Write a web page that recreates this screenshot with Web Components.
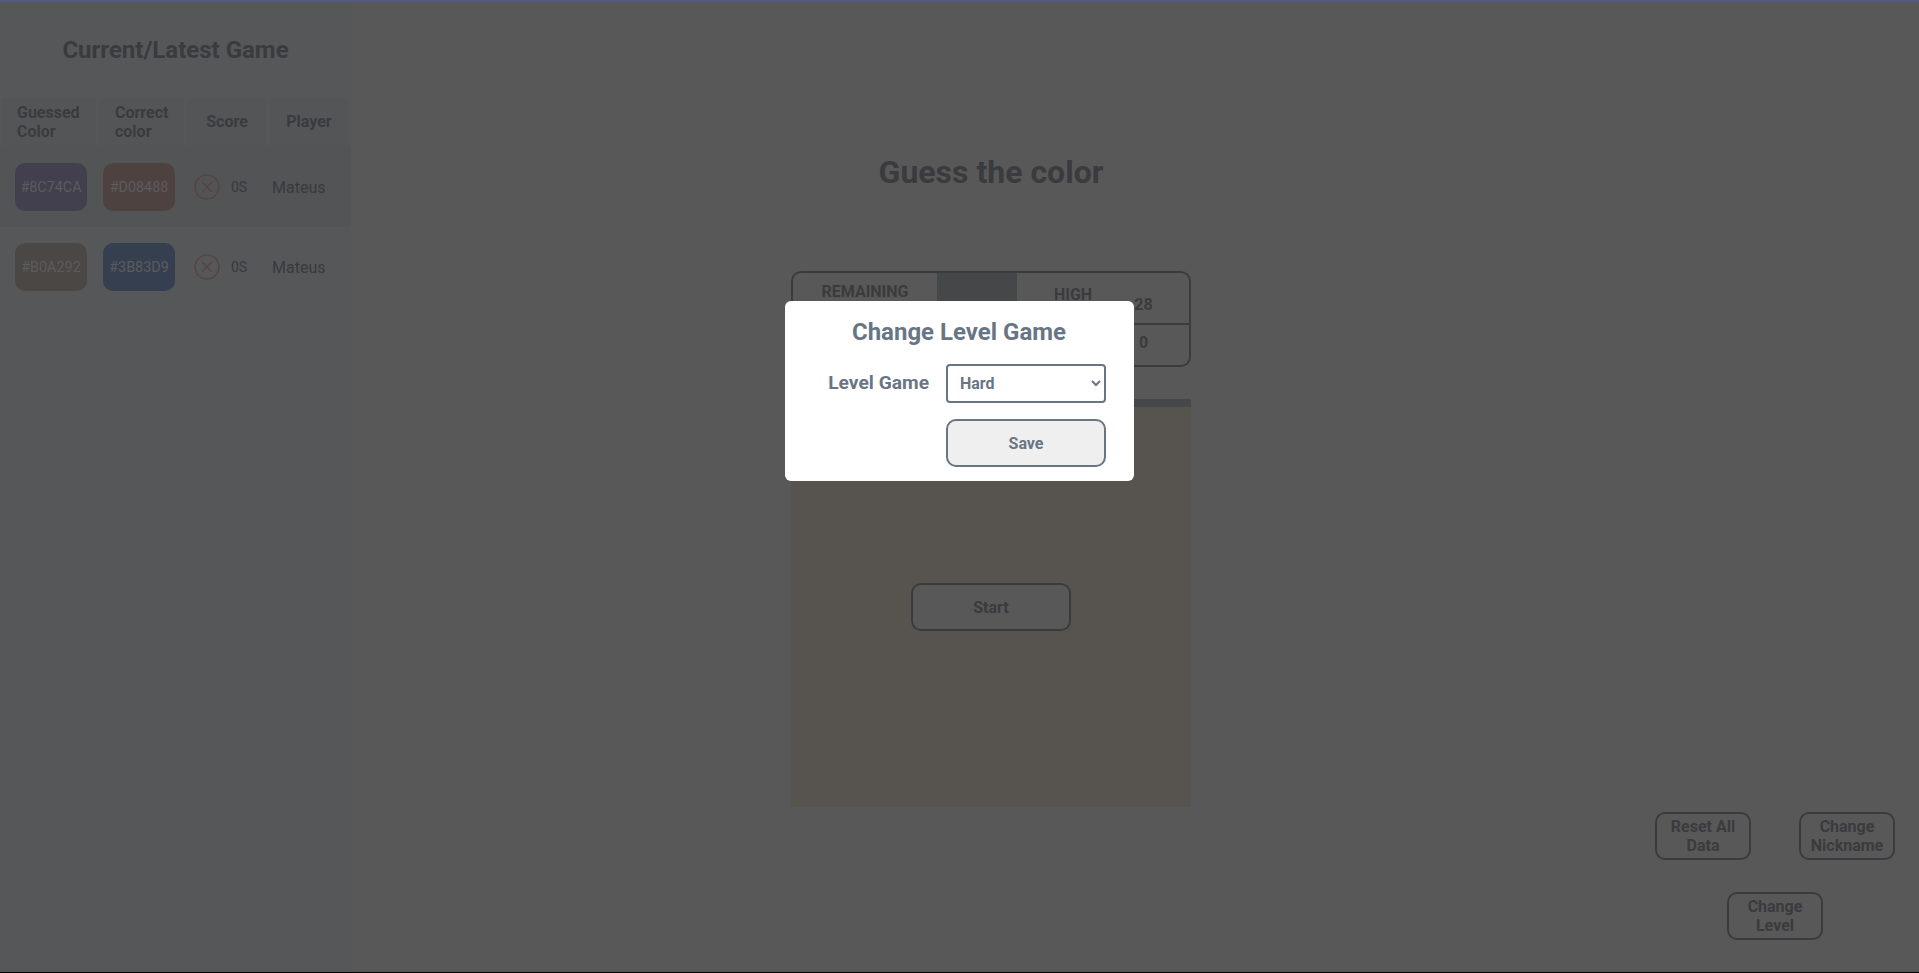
<!DOCTYPE html>
<html>
<head>
<meta charset="utf-8">
<title>Guess the color</title>
<style>
    html, body { margin: 0; height: 100%; }
    body { font-family: Roboto, "Liberation Sans", sans-serif; color: #74777d; background: #b0b0b0; overflow: hidden; }
</style>
</head>
<body>
<game-app></game-app>

<script>
// page shell: history on the left, game in the middle, settings bottom right
class GameApp extends HTMLElement {
    constructor() {
        super();
        this.attachShadow({ mode: "open" });
        this.shadowRoot.innerHTML = `
<style>
    :host { display: block; width: 100%; height: 973px; border-top: 2px solid #555a7e; border-bottom: 1px solid #000; box-sizing: border-box; position: relative; overflow: hidden; }
    .page { display: grid; grid-template-columns: 351px 1fr; height: 100%; }
    .main { position: relative; display: flex; flex-direction: column; align-items: center; padding-right: 288px; }
    h1 { margin: 148px 0 0; font-size: 32px; line-height: 44px; font-weight: 700; }
    game-scoreboard { margin-top: 77px; }
    game-board { margin-top: 32px; }
    game-settings { position: absolute; right: 24px; bottom: 32px; }
</style>
<div class="page">
    <history-panel></history-panel>
    <div class="main">
        <h1>Guess the color</h1>
        <game-scoreboard></game-scoreboard>
        <game-board></game-board>
        <game-settings></game-settings>
    </div>
</div>
<level-modal></level-modal>`;
    }
}

class HistoryPanel extends HTMLElement {
    constructor() {
        super();
        this.attachShadow({ mode: "open" });
        this.shadowRoot.innerHTML = `
<style>
    :host { display: block; background: #adafb1; height: 100%; }
    h2 { margin: 0; padding: 32px 0 31px; height: 33px; font-size: 24px; line-height: 33px; font-weight: 700; text-align: center; box-sizing: content-box; }
    .head { display: grid; grid-template-columns: 94px 85px 80px 78px; column-gap: 3px; height: 47px; padding: 0 2px; box-sizing: border-box; }
    .head div { background: #a9abae; display: flex; align-items: center; justify-content: center; font-size: 16px; line-height: 19px; font-weight: 700; }
    .head .left { justify-content: flex-start; padding-left: 15px; }
    .head .left + .left { padding-left: 16px; }
</style>
<h2>Current/Latest Game</h2>
<div class="head">
    <div class="left">Guessed<br>Color</div>
    <div class="left">Correct<br>color</div>
    <div>Score</div>
    <div>Player</div>
</div>
<history-row guessed="#8C74CA" correct="#D08488" bg1="#84809e" bg2="#9c8482" shaded></history-row>
<history-row guessed="#B0A292" correct="#3B83D9" bg1="#948f88" bg2="#6a7f9f"></history-row>`;
    }
}

class HistoryRow extends HTMLElement {
    constructor() {
        super();
        this.attachShadow({ mode: "open" });
    }
    connectedCallback() {
        var guessed = this.getAttribute("guessed");
        var correct = this.getAttribute("correct");
        this.shadowRoot.innerHTML = `
<style>
    :host { display: flex; align-items: center; height: 80px; padding-left: 15px; box-sizing: border-box; color: #70757f; }
    :host([shaded]) { background: #a5a8aa; height: 82px; padding-top: 2px; }
    .swatch { width: 72px; height: 48px; border-radius: 10px; display: flex; align-items: center; justify-content: center; color: #b6b6ba; font-size: 14.4px; margin-right: 16px; }
    svg { width: 26px; height: 26px; margin-left: 3px; }
    .time { font-size: 14px; margin-left: 11px; width: 41px; }
    .name { font-size: 16px; }
</style>
<div class="swatch" style="background:${this.getAttribute("bg1")}">${guessed}</div>
<div class="swatch" style="background:${this.getAttribute("bg2")}">${correct}</div>
<svg viewBox="0 0 26 26" fill="none" stroke="#b08684" stroke-width="1.5"><circle cx="13" cy="13" r="12"/><path d="M8.5 8.5l9 9M17.5 8.5l-9 9" stroke-linecap="round"/></svg>
<span class="time">0S</span>
<span class="name">Mateus</span>`;
    }
}

class GameScoreboard extends HTMLElement {
    constructor() {
        super();
        this.attachShadow({ mode: "open" });
        this.shadowRoot.innerHTML = `
<style>
    :host { display: grid; grid-template-columns: 144px 80px 1fr; width: 400px; height: 96px; border: 2px solid #74777d; border-radius: 10px; box-sizing: border-box; overflow: hidden; font-weight: 700; font-size: 16px; line-height: 20px; }
    .cell { padding-top: 9px; text-align: center; }
    .time { background: #8c8e92; }
    .high { padding: 12px 0 0 16px; width: 80px; text-align: center; }
    .right { display: grid; grid-template-columns: 80px 1fr; }
    .vals { display: grid; grid-template-rows: 50px 1fr; text-align: center; padding-left: 1px; }
    .vals div:first-child { padding-top: 22px; box-sizing: border-box; }
    .vals div:last-child { border-top: 2px solid #74777d; padding-top: 8px; }
</style>
<div class="cell">REMAINING<br>TIME</div>
<div class="time"></div>
<div class="right">
    <div class="high">HIGH<br>SCORE</div>
    <div class="vals"><div>28</div><div>0</div></div>
</div>`;
    }
}

class GameBoard extends HTMLElement {
    constructor() {
        super();
        this.attachShadow({ mode: "open" });
        this.shadowRoot.innerHTML = `
<style>
    :host { display: flex; width: 400px; height: 408px; align-items: center; justify-content: center; background: #aea89e; border-top: 8px solid #8c8e92; box-sizing: border-box; }
    button-outline { width: 160px; }
</style>
<button-outline>Start</button-outline>`;
    }
}

class ButtonOutline extends HTMLElement {
    constructor() {
        super();
        this.attachShadow({ mode: "open" });
        this.shadowRoot.innerHTML = `
<style>
    :host { display: flex; align-items: center; justify-content: center; height: 48px; width: 96px; border: 2px solid #74777d; border-radius: 10px; box-sizing: border-box; background: #b0b0b0; font-size: 16px; line-height: 19px; font-weight: 700; text-align: center; color: #74777d; cursor: pointer; }
</style>
<slot></slot>`;
    }
}

class GameSettings extends HTMLElement {
    constructor() {
        super();
        this.attachShadow({ mode: "open" });
        this.shadowRoot.innerHTML = `
<style>
    :host { display: grid; grid-template-columns: 96px 48px 96px; grid-template-rows: 48px 48px; row-gap: 32px; }
    .a { grid-column: 1; } .b { grid-column: 3; }
    .c { grid-column: 1 / 4; justify-self: center; }
</style>
<button-outline class="a">Reset All Data</button-outline>
<button-outline class="b">Change Nickname</button-outline>
<button-outline class="c">Change Level</button-outline>`;
    }
}

class LevelModal extends HTMLElement {
    constructor() {
        super();
        this.attachShadow({ mode: "open" });
        this.shadowRoot.innerHTML = `
<style>
    :host { position: absolute; inset: 0; display: block; background: rgba(0,0,0,.5); color: #687585; }
    .card { position: absolute; left: 785px; top: 299px; width: 349px; height: 180px; box-sizing: border-box; background: #fff; border-radius: 6px; padding: 15px 28px 0 27px; }
    h3 { margin: 0 0 16px; font-size: 24px; line-height: 32px; text-align: center; font-weight: 700; }
    .row { display: grid; grid-template-columns: 1fr 160px; column-gap: 17px; align-items: center; }
    label { font-size: 19.2px; font-weight: 700; text-align: right; padding-bottom: 2px; }
    select { height: 39px; border: 2px solid #687585; border-radius: 4px; background: #fff; color: #687585; font: 700 16px Roboto, sans-serif; padding-left: 8px; }
    button { grid-column: 2; height: 48px; margin-top: 16px; background: #efefef; border: 2px solid #687585; border-radius: 10px; color: #687585; font: 700 16px Roboto, sans-serif; }
</style>
<div class="card">
    <h3>Change Level Game</h3>
    <div class="row">
        <label>Level Game</label>
        <select><option>Easy</option><option>Medium</option><option selected>Hard</option></select>
        <button>Save</button>
    </div>
</div>`;
    }
}

customElements.define("history-row", HistoryRow);
customElements.define("history-panel", HistoryPanel);
customElements.define("button-outline", ButtonOutline);
customElements.define("game-scoreboard", GameScoreboard);
customElements.define("game-board", GameBoard);
customElements.define("game-settings", GameSettings);
customElements.define("level-modal", LevelModal);
customElements.define("game-app", GameApp);
</script>
</body>
</html>
